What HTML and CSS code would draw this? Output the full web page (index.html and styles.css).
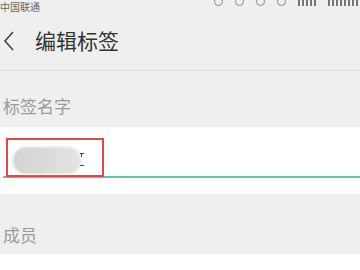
FILE: index.html
```html
<!DOCTYPE html>
<html lang="zh-CN">
<head>
    <meta charset="UTF-8">
    <meta name="viewport" content="width=device-width, initial-scale=1.0">
    <title>编辑标签</title>
    <link rel="stylesheet" href="styles.css">
</head>
<body>

<div class="status-bar">
    <span class="carrier">中国联通</span>
    <div class="status-icons">
        <span class="dot"></span>
        <span class="dot"></span>
        <span class="dot"></span>
        <span class="dot"></span>
        <span class="bars"></span>
        <span class="bars wide"></span>
    </div>
</div>

<div class="header">
    <svg class="back" width="14" height="22" viewBox="0 0 14 22">
        <path d="M11 2 L3 11 L11 20" fill="none" stroke="#444" stroke-width="1.6"/>
    </svg>
    <h1 class="title">编辑标签</h1>
</div>

<div class="section-label label-name">标签名字</div>

<div class="input-row">
    <div class="input-box">
        <div class="blurred"></div>
        <span class="cursor top"></span>
        <span class="cursor bottom"></span>
    </div>
</div>

<div class="section-label label-members">成员</div>

<div class="members"></div>

</body>
</html>
```

FILE: styles.css
```css
/* Edit tag screen */
body {
    margin: 0;
    background-color: #efefef;
    font-family: "Noto Sans CJK SC", "Noto Sans", sans-serif;
    width: 360px;
    height: 270px;
    overflow: hidden;
}

.status-bar {
    height: 12px;
    display: flex;
    justify-content: space-between;
    align-items: flex-start;
}

.carrier {
    font-size: 10px;
    color: #666;
    line-height: 15px;
    margin-top: -1px;
}

.status-icons {
    display: flex;
    gap: 12px;
    padding-right: 2px;
    height: 7px;
    overflow: hidden;
}

.dot {
    width: 9px;
    height: 9px;
    margin-top: -3px;
    border: 1.5px solid #888;
    border-radius: 50%;
    box-sizing: border-box;
}

.bars {
    width: 18px;
    height: 6px;
    background: repeating-linear-gradient(90deg, #777 0 2px, transparent 2px 4px);
}

.bars.wide {
    width: 30px;
}

.header {
    height: 58px;
    display: flex;
    align-items: center;
    border-bottom: 1px solid #dedede;
}

.back {
    margin-left: 2px;
    margin-top: -1px;
}

.title {
    margin: -2px 0 0 19px;
    font-size: 21px;
    font-weight: normal;
    color: #333;
}

.section-label {
    font-size: 17px;
    color: #9a9a9a;
    padding-left: 3px;
}

.label-name {
    height: 56px;
    line-height: 70px;
}

.input-row {
    height: 67px;
    background-color: #fff;
    padding-top: 11px;
    box-sizing: border-box;
}

.input-box {
    margin-left: 3px;
    height: 40px;
    border-bottom: 2px solid #5cc6a8;
    position: relative;
    box-sizing: border-box;
}

.input-box::before {
    content: "";
    position: absolute;
    left: 3px;
    top: 0;
    width: 98px;
    height: 39px;
    border: 2px solid #e8463f;
    box-sizing: border-box;
}

.blurred {
    position: absolute;
    left: 10px;
    top: 9px;
    width: 68px;
    height: 27px;
    border-radius: 13px;
    background: linear-gradient(90deg, #d4d4d4, #dadada 45%, #e4e4e4);
    filter: blur(1.2px);
}

.cursor {
    position: absolute;
    left: 77px;
    width: 4px;
    border-top: 1px solid #444;
}

.cursor.top {
    top: 15px;
    height: 3px;
}

.cursor.top::after {
    content: "";
    position: absolute;
    left: 1px;
    top: 0;
    height: 3px;
    border-left: 1px solid #444;
}

.cursor.bottom {
    top: 27px;
}

.label-members {
    height: 60px;
    line-height: 82px;
}

.members {
    height: 20px;
    background-color: #fff;
}
```
